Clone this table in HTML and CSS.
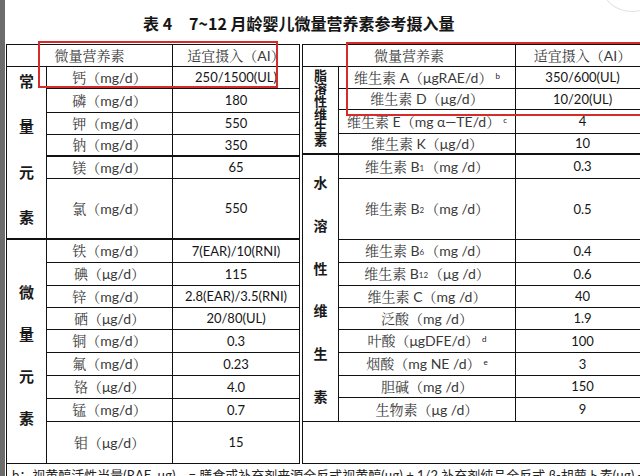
FILE: index.html
```html
<!DOCTYPE html>
<html lang="zh-CN">
<head>
<meta charset="utf-8">
<title>表4 7~12月龄婴儿微量营养素参考摄入量</title>
<link rel="stylesheet" href="styles.css">
</head>
<body>
<div class="page">
  <div class="strip"></div>
  <div class="doc">
    <div class="title"><span>表 4</span><span class="title-main">7~12 月龄婴儿微量营养素参考摄入量</span></div>
    <div class="tables">
      <div class="grid grid-left">
        <div class="c name hd span2">微量营养素</div>
        <div class="c name hd">适宜摄入（AI）</div>

        <div class="c grp grp-const tb">
          <span>常</span><span>量</span><span>元</span><span>素</span>
        </div>
        <div class="c name">钙（mg/d）</div><div class="c val">250/1500(UL)</div>
        <div class="c name">磷（mg/d）</div><div class="c val">180</div>
        <div class="c name">钾（mg/d）</div><div class="c val">550</div>
        <div class="c name tb">钠（mg/d）</div><div class="c val tb">350</div>
        <div class="c name">镁（mg/d）</div><div class="c val">65</div>
        <div class="c name tb">氯（mg/d）</div><div class="c val tb">550</div>

        <div class="c grp grp-trace">
          <span>微</span><span>量</span><span>元</span><span>素</span>
        </div>
        <div class="c name">铁（mg/d）</div><div class="c val">7(EAR)/10(RNI)</div>
        <div class="c name">碘（μg/d）</div><div class="c val">115</div>
        <div class="c name">锌（mg/d）</div><div class="c val">2.8(EAR)/3.5(RNI)</div>
        <div class="c name">硒（μg/d）</div><div class="c val">20/80(UL)</div>
        <div class="c name">铜（mg/d）</div><div class="c val">0.3</div>
        <div class="c name">氟（mg/d）</div><div class="c val">0.23</div>
        <div class="c name">铬（μg/d）</div><div class="c val">4.0</div>
        <div class="c name">锰（mg/d）</div><div class="c val">0.7</div>
        <div class="c name">钼（μg/d）</div><div class="c val">15</div>
      </div>

      <div class="grid grid-right">
        <div class="c name hd span2">微量营养素</div>
        <div class="c name hd">适宜摄入（AI）</div>

        <div class="c grp grp-fat tb">
          <span>脂</span><span>溶</span><span>性</span><span>维</span><span>生</span><span>素</span>
        </div>
        <div class="c name">维生素 A（μgRAE/d）<sup>b</sup></div><div class="c val">350/600(UL)</div>
        <div class="c name">维生素 D（μg/d）</div><div class="c val">10/20(UL)</div>
        <div class="c name">维生素 E（mg α—TE/d）<sup>c</sup></div><div class="c val">4</div>
        <div class="c name tb">维生素 K（μg/d）</div><div class="c val tb">10</div>

        <div class="c grp grp-water">
          <span>水</span><span>溶</span><span>性</span><span>维</span><span>生</span><span>素</span>
        </div>
        <div class="c name">维生素 B<sub>1</sub>（mg /d）</div><div class="c val">0.3</div>
        <div class="c name">维生素 B<sub>2</sub>（mg /d）</div><div class="c val">0.5</div>
        <div class="c name">维生素 B<sub>6</sub>（mg /d）</div><div class="c val">0.4</div>
        <div class="c name">维生素 B<sub>12</sub>（μg /d）</div><div class="c val">0.6</div>
        <div class="c name">维生素 C（mg /d）</div><div class="c val">40</div>
        <div class="c name">泛酸（mg /d）</div><div class="c val">1.9</div>
        <div class="c name">叶酸（μgDFE/d）<sup>d</sup></div><div class="c val">100</div>
        <div class="c name">烟酸（mg NE /d）<sup>e</sup></div><div class="c val">3</div>
        <div class="c name">胆碱（mg /d）</div><div class="c val">150</div>
        <div class="c name">生物素（μg /d）</div><div class="c val">9</div>
        <div class="c empty"></div>
      </div>
    </div>
    <div class="foot">b：视黄醇活性当量(RAE, μg)　= 膳食或补充剂来源全反式视黄醇(μg) + 1/2 补充剂纯品全反式 β-胡萝卜素(μg) + 1/12 膳食全反式 β-胡萝卜素(μg)</div>
  </div>

  <div class="mark mark-left"></div>
  <div class="mark mark-right"></div>
  <div class="corner"></div>
</div>
</body>
</html>
```

FILE: styles.css
```css
* { box-sizing: border-box; }

html, body {
  margin: 0;
  padding: 0;
  background: #fff;
}

body {
  font-family: "Noto Sans CJK SC", sans-serif;
  color: #111;
  overflow: hidden;
}

.page {
  position: relative;
  display: flex;
  height: 476px;
  width: 640px;
  overflow: hidden;
}

.strip {
  flex: none;
  width: 5px;
  background: #6c6c6c;
}

.doc {
  flex: none;
  margin-left: 1px;
  width: 660px;
}

.title {
  height: 44px;
  display: flex;
  align-items: center;
  padding-left: 137px;
  padding-top: 1px;
  font-size: 16px;
  font-weight: 700;
  color: #151515;
}

.title-main {
  margin-left: 17px;
}

.tables {
  display: flex;
  gap: 2px;
}

.grid {
  display: grid;
  border-left: 1px solid #111;
  border-top: 1px solid #111;
}

.grid-left {
  grid-template-columns: 40px 126px 127px;
  grid-template-rows: 22px 22px 24px 22px 22px 22px 61px 23px 23px 22px 22px 23px 23px 23px 23px 42px;
}

.grid-right {
  grid-template-columns: 36px 177px 134px;
  grid-template-rows: 22px 22px 21px 24px 21px 24px 61px 23px 23px 22px 22px 23px 23px 22px 24px 42px;
}

.c {
  display: flex;
  align-items: center;
  justify-content: center;
  border-right: 1px solid #111;
  border-bottom: 1px solid #111;
  white-space: nowrap;
  line-height: 1;
}

.tb {
  border-bottom-width: 2px;
}

.span2 {
  grid-column: span 2;
}

.name {
  font-family: "Lato", "Noto Serif CJK SC", "Noto Sans CJK SC", sans-serif;
  font-size: 14px;
  color: #3a3a3a;
}

.hd {
  padding-top: 1px;
}

.val {
  font-family: "Lato", "Noto Sans CJK SC", sans-serif;
  font-size: 13px;
  color: #151515;
}

.name sup {
  font-size: 8px;
  margin-left: 3px;
  position: relative;
  top: -2px;
  color: #222;
}

.name sub {
  font-size: 8px;
  position: relative;
  top: 1px;
  margin-right: 1px;
}

.grp {
  flex-direction: column;
  font-family: "Noto Sans CJK SC", sans-serif;
  font-weight: 700;
  color: #1a1a1a;
  white-space: normal;
}

.grp span {
  display: block;
  line-height: 15px;
}

.grp-const {
  grid-row: span 6;
  font-size: 15px;
  justify-content: space-between;
  padding: 6px 0 14px;
}

.grp-trace {
  grid-row: span 9;
  font-size: 15px;
  justify-content: space-between;
  padding: 44px 0 38px;
}

.grp-fat {
  grid-row: span 4;
  font-size: 13px;
  justify-content: flex-start;
  padding-top: 1px;
}

.grp-fat span {
  line-height: 13px;
  height: 13px;
}

.grp-water {
  grid-row: span 10;
  font-size: 14px;
  justify-content: space-between;
  padding: 20px 0 17px;
}

.empty {
  grid-column: span 3;
}

.foot {
  border-left: 1px solid #111;
  height: 20px;
  padding: 3px 0 0 5px;
  font-family: "Lato", "Noto Sans CJK SC", sans-serif;
  font-size: 13px;
  line-height: 16px;
  color: #222;
  white-space: nowrap;
}

.mark {
  position: absolute;
  border: 2px solid #d42b2b;
  pointer-events: none;
}

.mark-left {
  left: 38px;
  top: 41px;
  width: 240px;
  height: 47px;
}

.mark-right {
  left: 346px;
  top: 42px;
  width: 320px;
  height: 74px;
}

.corner {
  position: absolute;
  left: 602px;
  top: -40px;
  width: 60px;
  height: 52px;
  border-radius: 50%;
  border: 1px solid #e2e2e2;
  background: #fff;
}
```
